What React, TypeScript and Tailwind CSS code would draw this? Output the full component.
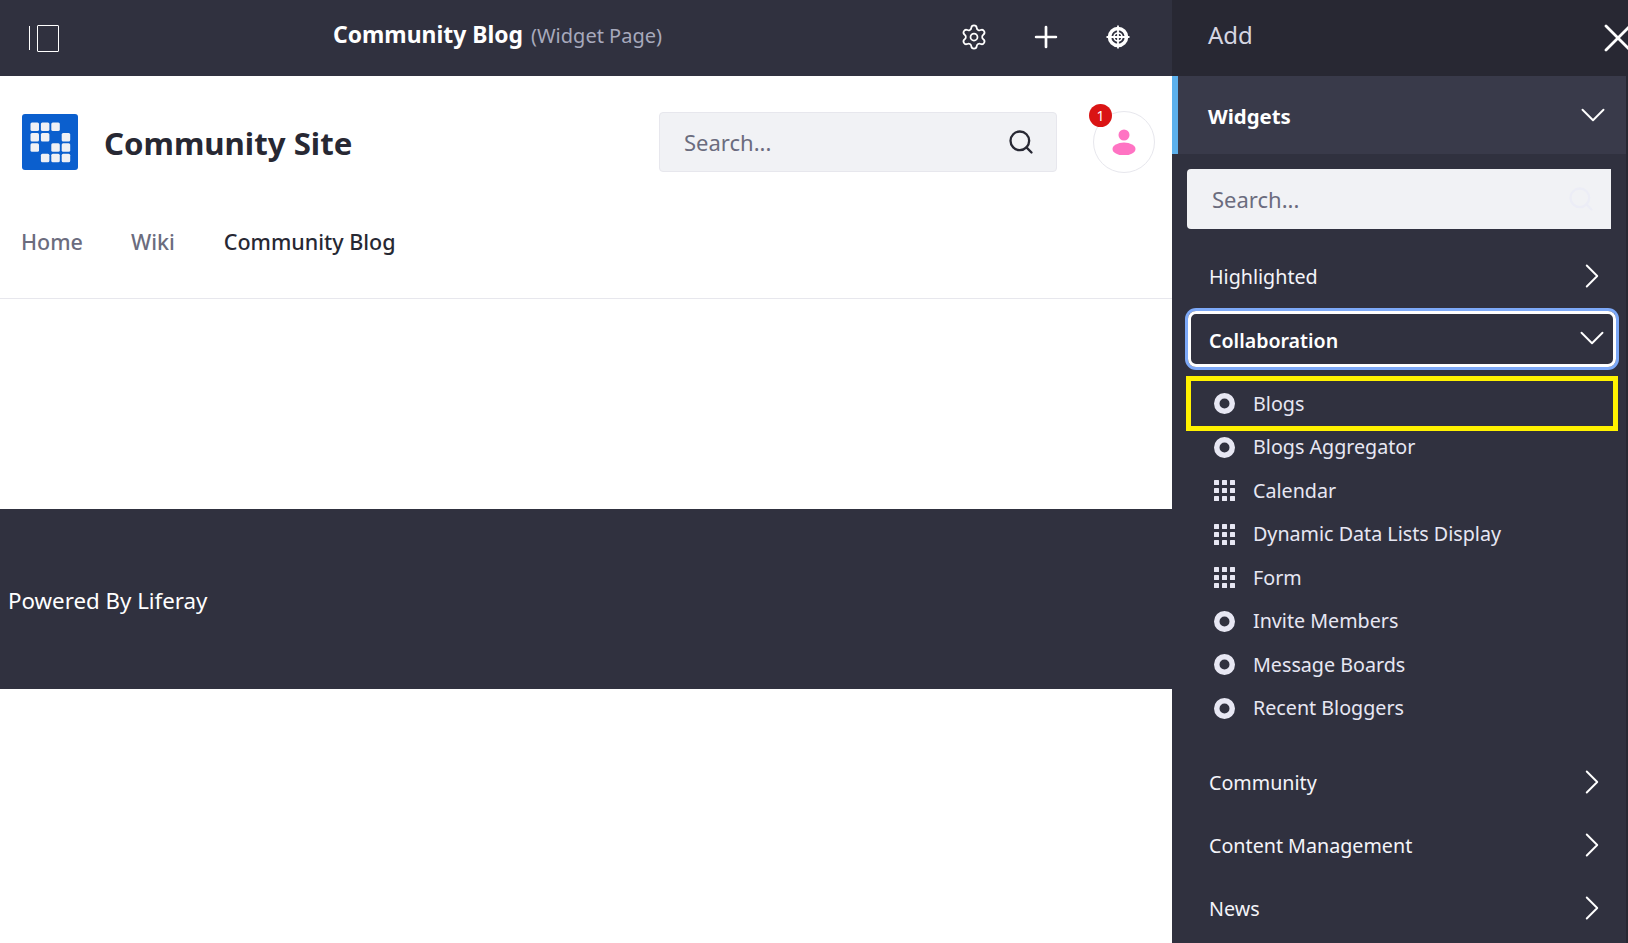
import { ChevronDown, ChevronRight, Plus, Search, Settings, X } from "lucide-react";

const FONT = "font-['Noto_Sans','Open_Sans',sans-serif]";

function CircleIcon() {
  return (
    <svg width="21" height="21" viewBox="0 0 21 21" className="shrink-0">
      <circle cx="10.5" cy="10.5" r="7.75" fill="none" stroke="#e7e7f3" strokeWidth="5.5" />
    </svg>
  );
}

function GridIcon() {
  return (
    <svg width="21" height="21" viewBox="0 0 21 21" className="shrink-0" fill="#e7e7f3">
      {[0, 8, 16].map((y) =>
        [0, 8, 16].map((x) => <rect key={`${x}-${y}`} x={x} y={y} width="5" height="5" rx="0.5" />)
      )}
    </svg>
  );
}

function SiteLogo() {
  const cells = [
    [0, 0], [1, 0], [2, 0],
    [0, 1], [1, 1], [3, 1],
    [0, 2], [2, 2], [3, 2],
    [1, 3], [2, 3], [3, 3],
  ];
  return (
    <svg width="56" height="56" viewBox="0 0 56 56" className="shrink-0">
      <rect width="56" height="56" rx="3" fill="#0b5fce" />
      {cells.map(([x, y]) => (
        <rect key={`${x}-${y}`} x={8.5 + x * 10.4} y={8.5 + y * 10.4} width="8.5" height="8.5" rx="1.5" fill="#f0f1f5" />
      ))}
    </svg>
  );
}

function SimulationIcon() {
  return (
    <svg width="24" height="24" viewBox="0 0 24 24" fill="none" stroke="#fff">
      <circle cx="12" cy="12" r="8.5" strokeWidth="3.6" />
      <circle cx="12" cy="12" r="4" strokeWidth="1.6" />
      <path d="M12 0.5v23M0.5 12h23" strokeWidth="1.8" />
    </svg>
  );
}

const widgets = [
  { label: "Blogs", kind: "circle" },
  { label: "Blogs Aggregator", kind: "circle" },
  { label: "Calendar", kind: "grid" },
  { label: "Dynamic Data Lists Display", kind: "grid" },
  { label: "Form", kind: "grid" },
  { label: "Invite Members", kind: "circle" },
  { label: "Message Boards", kind: "circle" },
  { label: "Recent Bloggers", kind: "circle" },
];

function CategoryRow({ label }: { label: string }) {
  return (
    <div className="flex h-[63px] shrink-0 items-center justify-between pl-[37px] pr-[13px] text-[19.7px] text-[#f4f4f9]">
      <span>{label}</span>
      <ChevronRight size={42} strokeWidth={1.1} color="#fff" className="mt-[-2px]" />
    </div>
  );
}

export default function App() {
  return (
    <div className={`${FONT} flex h-[943px] w-[1628px] overflow-hidden bg-white`}>
      <div className="flex w-[1172px] shrink-0 flex-col">
        <div className="flex h-[76px] items-center bg-[#30313f] pl-[29px] pr-[18px]">
          <div className="flex h-[27px] w-[30px] items-center gap-[7px]">
            <div className="h-[24px] w-px bg-white" />
            <div className="h-[27px] w-[22px] rounded-[1px] border border-white" />
          </div>
          <div className="ml-[274px] flex flex-1 items-baseline gap-[8px] whitespace-nowrap pb-[5px]">
            <span className="text-[22.9px] font-bold text-white">Community Blog</span>
            <span className="text-[20px] text-[#a7a9bc]">(Widget Page)</span>
          </div>
          <div className="flex items-center pb-[2px]">
            <div className="flex w-[72px] justify-center">
              <Settings size={28} strokeWidth={1.5} color="#fff" />
            </div>
            <div className="flex w-[72px] justify-center">
              <Plus size={34} strokeWidth={1.9} color="#fff" />
            </div>
            <div className="flex w-[72px] justify-center">
              <SimulationIcon />
            </div>
          </div>
        </div>

        <div className="flex h-[223px] flex-col border-b border-[#e7e7ed] pl-[22px] pr-[17px]">
          <div className="flex items-center pt-[35px]">
            <SiteLogo />
            <span className="ml-[26px] pt-[3px] text-[31.2px] font-bold text-[#272833]">Community Site</span>
            <div className="ml-auto flex h-[60px] w-[398px] items-center justify-between rounded-[4px] border border-[#e7e7ed] bg-[#f1f2f5] pl-[24px] pr-[21px] text-[22px] text-[#6b6c7e]">
              <span>Search...</span>
              <Search size={28} strokeWidth={2} color="#272833" />
            </div>
            <div className="relative ml-[36px] flex h-[62px] w-[62px] items-center justify-center rounded-full border border-[#e7e7ed] bg-white">
              <svg width="24" height="26" viewBox="0 0 24 26" fill="#ff73c3">
                <circle cx="12" cy="6" r="5.5" />
                <ellipse cx="12" cy="20" rx="11.5" ry="6.5" />
              </svg>
              <div className="absolute left-[-5px] top-[-8px] flex h-[23px] w-[23px] items-center justify-center rounded-full bg-[#da1414] text-[14px] text-white">
                1
              </div>
            </div>
          </div>
          <div className="ml-[-1px] mt-[53px] flex gap-[48px] text-[21.5px]">
            <span className="font-medium text-[#6b6c7e]">Home</span>
            <span className="font-medium text-[#6b6c7e]">Wiki</span>
            <span className="ml-[1px] font-medium text-[#272833]">Community Blog</span>
          </div>
        </div>

        <div className="h-[210px]" />

        <div className="flex h-[180px] items-center bg-[#30313f] pl-[8px] pt-[4px] text-[22.3px] text-white">
          Powered By Liferay
        </div>
      </div>

      <div className="flex w-[456px] shrink-0 flex-col bg-[#282833]">
        <div className="flex h-[76px] shrink-0 items-center justify-between pl-[36px] text-[24px] text-[#d5d6e2]">
          <span className="pb-[7px]">Add</span>
          <X size={48} strokeWidth={1.4} color="#fff" className="mr-[-14px] shrink-0" />
        </div>
        <div className="mr-[2px] flex flex-1 flex-col bg-[#30313f]">
          <div className="flex h-[78px] shrink-0 items-center justify-between border-l-[6px] border-[#5cb0ec] bg-[#393a4a] pl-[30px] pr-[12px]">
            <span className="pt-[2px] text-[20.4px] font-bold text-white">Widgets</span>
            <ChevronDown size={42} strokeWidth={1.1} color="#fff" />
          </div>
          <div className="pl-[15px] pr-[15px] pt-[15px]">
            <div className="flex h-[60px] items-center justify-between rounded-l-[4px] bg-[#f1f2f5] pl-[25px] pr-[16px] text-[22px] text-[#6b6c7e]">
              <span>Search...</span>
              <Search size={28} strokeWidth={2} color="#ecedf6" />
            </div>
          </div>
          <div className="mt-[16px]">
            <CategoryRow label="Highlighted" />
          </div>
          <div className="mt-[3px] pl-[16px] pr-[10px]">
            <div className="flex h-[56px] items-center justify-between rounded-[8px] border-[3px] border-white pl-[18px] text-[19.6px] font-semibold text-white shadow-[0_0_0_3px_#7da9f8]">
              <span className="pt-[3px]">Collaboration</span>
              <ChevronDown size={42} strokeWidth={1.1} color="#fff" className="mt-[-3px]" />
            </div>
          </div>
          <div className="mb-[21px] mt-[15px] flex flex-col">
            {widgets.map((w, i) => (
              <div
                key={w.label}
                className="relative flex h-[43.5px] items-center gap-[18px] pl-[42px] text-[19.7px] text-[#e7e7f3]"
              >
                {w.kind === "grid" ? <GridIcon /> : <CircleIcon />}
                <span>{w.label}</span>
                {i === 0 && (
                  <div className="absolute bottom-[-5px] left-[14px] right-[8px] top-[-6px] border-[5px] border-[#fff200]" />
                )}
              </div>
            ))}
          </div>
          <CategoryRow label="Community" />
          <CategoryRow label="Content Management" />
          <CategoryRow label="News" />
        </div>
      </div>
    </div>
  );
}
